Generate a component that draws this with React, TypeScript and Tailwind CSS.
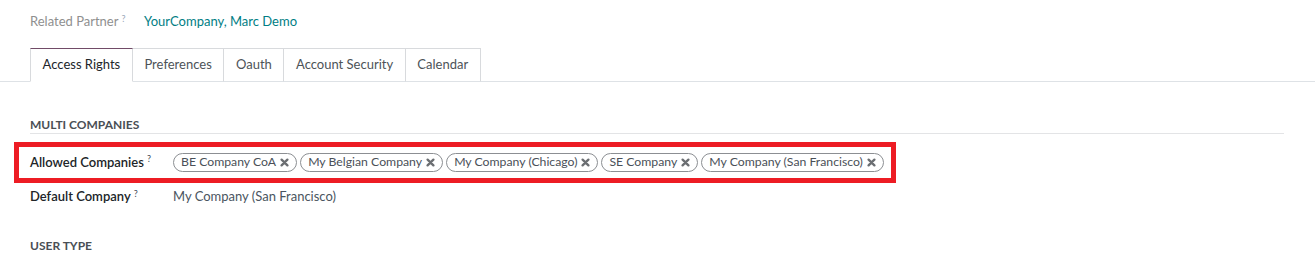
function XIcon() {
  return (
    <svg width="9" height="9" viewBox="0 0 9 9" className="shrink-0">
      <path d="M1.6 1.6 L7.4 7.4 M7.4 1.6 L1.6 7.4" stroke="#6b6e72" strokeWidth="2.3" strokeLinecap="round" />
    </svg>
  );
}

function Tag({ label }: { label: string }) {
  return (
    <span className="flex items-center h-[19px] rounded-full border border-[#8c8f93] pl-[7px] pr-[7px] gap-[4px] text-[12.25px] leading-none text-[#4a5058]">
      <span>{label}</span>
      <XIcon />
    </span>
  );
}

export default function App() {
  const tabs = ['Access Rights', 'Preferences', 'Oauth', 'Account Security', 'Calendar'];
  const companies = [
    'BE Company CoA',
    'My Belgian Company',
    'My Company (Chicago)',
    'SE Company',
    'My Company (San Francisco)',
  ];
  return (
    <div
      className="w-[1315px] h-[254px] bg-white overflow-hidden text-[13px] text-[#212529]"
      style={{ fontFamily: 'Lato, sans-serif' }}
    >
      <div className="pt-[12px]">
        <div className="flex items-center h-[20px] pl-[30px]">
          <span className="w-[114px] text-[#8f8f8f]">
            Related Partner<sup className="text-[9px] ml-[3px] text-[#9aa8b8]">?</sup>
          </span>
          <span className="text-[#017e84]">YourCompany, Marc Demo</span>
        </div>

        <div className="mt-[16px] flex border-b border-[#dee2e6] pl-[30px]">
          {tabs.map((t, i) => (
            <div
              key={t}
              className={
                'h-[34px] -mb-px flex items-center px-[11.6px] border-t border-r ' +
                (i === 0
                  ? 'border-l border-t-[#714b67] border-l-[#d8dadd] border-r-[#d8dadd] border-b border-b-white bg-white text-[#212529]'
                  : 'border-[#d8dadd] border-b border-b-transparent text-[#4d5358]')
              }
            >
              {t}
            </div>
          ))}
        </div>

        <div className="pl-[30px] pr-[31px]">
          <div className="mt-[35px] h-[17px] leading-[16px] border-b border-[#e3e4e6] text-[12px] font-bold text-[#4a4f55] uppercase">
            Multi Companies
          </div>

          <div className="relative mt-[13px] h-[31px] flex items-center">
            <div className="w-[143px] shrink-0 font-semibold text-[#212529]">
              Allowed Companies<sup className="text-[9px] ml-[3px] font-normal text-[#3d4a58]">?</sup>
            </div>
            <div className="flex items-center gap-[3px]">
              {companies.map((c) => (
                <Tag key={c} label={c} />
              ))}
            </div>
            <div className="absolute -left-[16px] -top-[5px] w-[882px] h-[41px] border-[5px] border-[#ed1c24] pointer-events-none" />
          </div>

          <div className="mt-[4px] h-[30px] flex items-center">
            <div className="w-[143px] shrink-0 font-semibold text-[#212529]">
              Default Company<sup className="text-[9px] ml-[3px] font-normal text-[#3d4a58]">?</sup>
            </div>
            <div className="text-[#4a5560]">My Company (San Francisco)</div>
          </div>

          <div className="mt-[26px] h-[16px] leading-[16px] text-[12px] font-bold text-[#4a4f55] uppercase">
            User Type
          </div>
        </div>
      </div>
    </div>
  );
}
